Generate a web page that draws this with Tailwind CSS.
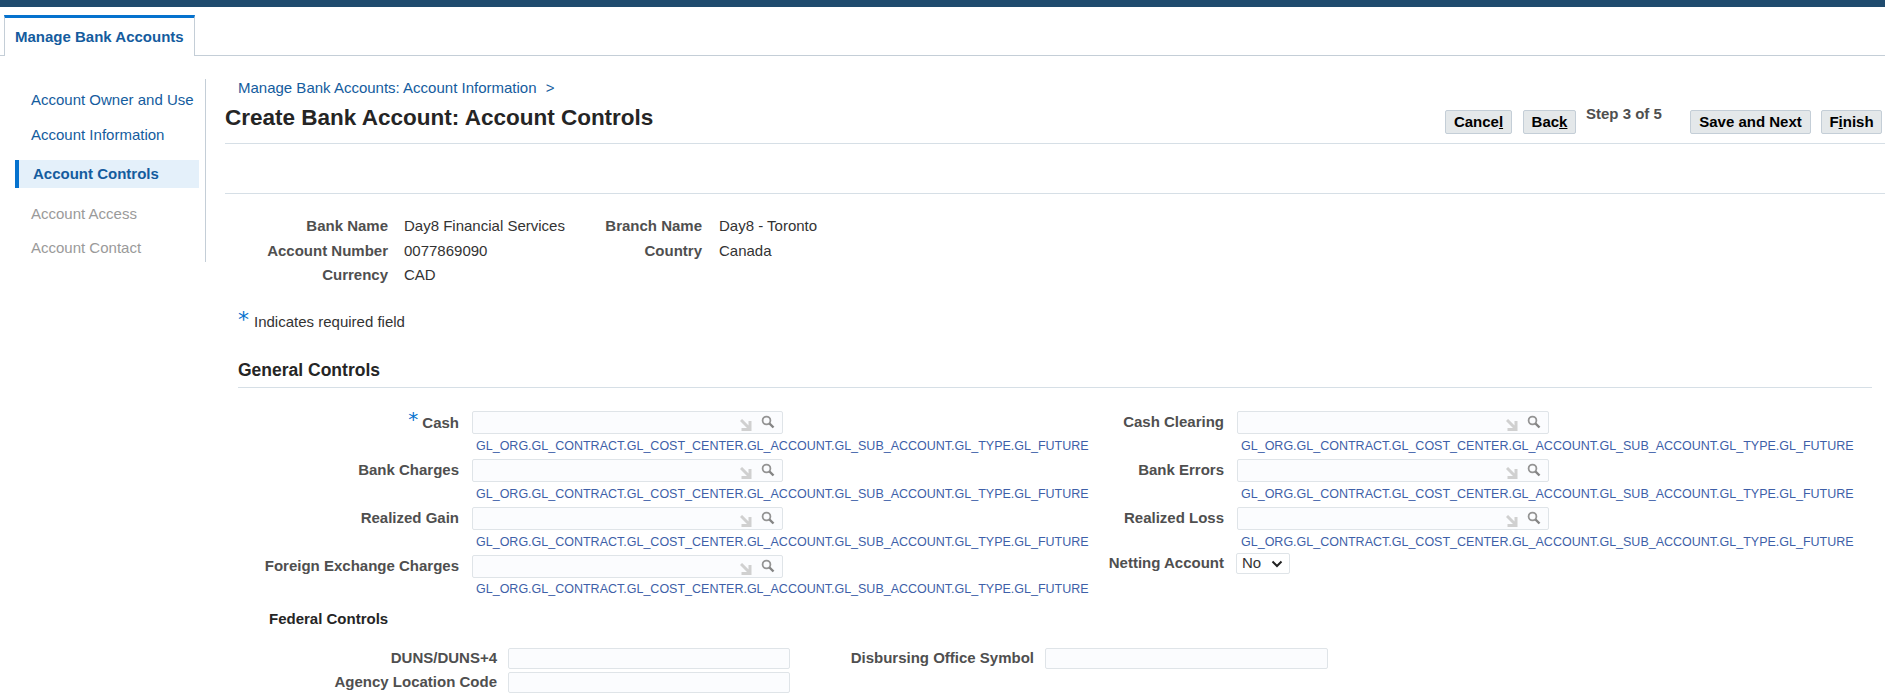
<!DOCTYPE html>
<html lang="en">

<head>
    <meta charset="UTF-8">
    <title>Create Bank Account: Account Controls</title>
    <script src="https://cdn.jsdelivr.net/npm/@tailwindcss/browser@4"></script>
</head>

<body class="bg-white font-['Liberation_Sans',Arial,sans-serif] h-[700px] overflow-hidden">

    <!-- Top bar -->
    <div class="h-[7px] bg-[#1f4b6e]"></div>

    <!-- Tab strip -->
    <div class="mt-[8px] h-[41px] border-b border-[#c4ced7] pl-[4px] flex">
        <div class="w-[191px] h-[41px] bg-white border-t-[3px] border-t-[#0572ce] border-x border-x-[#c4ced7] pl-[10px] flex items-center text-[15px] font-bold text-[#145c9e]">Manage Bank Accounts</div>
    </div>

    <div class="flex">
        <!-- Side navigation -->
        <div class="w-[206px] h-[183px] mt-[23px] border-r border-[#c4ced7] shrink-0 text-[15px]">
            <div class="h-[42px] pl-[31px] pt-[10px] text-[#145c9e] whitespace-nowrap">Account Owner and Use</div>
            <div class="h-[33px] pl-[31px] pt-[3px] text-[#145c9e]">Account Information</div>
            <div class="ml-[15px] mr-[6px] h-[28px] mt-[6px] pl-[14px] flex items-center border-l-[4px] border-[#0572ce] bg-[#e4f0fa] font-bold text-[#145c9e]">Account Controls</div>
            <div class="h-[17px] pl-[31px] pt-[17px] text-[#9a9a9a] leading-[17px] box-content">Account Access</div>
            <div class="pl-[31px] pt-[17px] text-[#9a9a9a] leading-[17px]">Account Contact</div>
        </div>

        <!-- Main content -->
        <div class="ml-[19px] w-[1660px] shrink-0">
            <div class="pl-[13px] pt-[24px] h-[41px] text-[15px] text-[#145c9e] leading-[16px]">Manage Bank Accounts: Account Information <span class="ml-[5px]">&gt;</span></div>

            <div class="flex h-[47px] border-b border-[#d6dfe6] relative">
                <h1 class="text-[22.500px] font-bold text-[#252525] leading-[24px] mt-[9px]">Create Bank Account: Account Controls</h1>
                <div class="ml-auto flex items-start mt-[13px] text-[15px] font-bold text-black">
                    <button class="w-[67px] h-[24px] bg-[#e4e8ea] border border-[#c4ced7] rounded-[2px]">Cance<u>l</u></button>
                    <button class="w-[53px] h-[24px] ml-[11px] bg-[#e4e8ea] border border-[#c4ced7] rounded-[2px]">Bac<u>k</u></button>
                    <div class="w-[114px] pl-[10px] text-[#4f4f4f] mt-[-7px]">Step 3 of 5</div>
                    <button class="w-[121px] h-[24px] bg-[#e4e8ea] border border-[#c4ced7] rounded-[2px]">Save and Next</button>
                    <button class="w-[61px] h-[24px] ml-[10px] mr-[3px] bg-[#e4e8ea] border border-[#c4ced7] rounded-[2px]">F<u>i</u>nish</button>
                </div>
            </div>
            <div class="h-[50px] border-b border-[#d6dfe6]"></div>

            <!-- Account summary -->
            <div class="mt-[20px] h-[74px] flex text-[15px] leading-[24.5px] text-[#333]">
                <div class="w-[163px] text-right font-bold text-[#4f4f4f]">
                    <div>Bank Name</div>
                    <div>Account Number</div>
                    <div>Currency</div>
                </div>
                <div class="ml-[16px] w-[298px]">
                    <div>Day8 Financial Services</div>
                    <div>0077869090</div>
                    <div>CAD</div>
                </div>
                <div class="w-[0px] flex justify-end whitespace-nowrap text-right font-bold text-[#4f4f4f]">
                    <div>
                        <div>Branch Name</div>
                        <div>Country</div>
                    </div>
                </div>
                <div class="ml-[17px]">
                    <div>Day8 - Toronto</div>
                    <div>Canada</div>
                </div>
            </div>

            <!-- Required note -->
            <div class="mt-[20px] ml-[13px] h-[24px] flex text-[15px] text-[#333]">
                <span class="text-[#0572ce] text-[22px] leading-[24px] w-[16px] font-['DejaVu_Sans']">*</span>
                <span class="mt-[6px] leading-[16px]">Indicates required field</span>
            </div>

            <!-- General Controls -->
            <div class="mt-[25px] ml-[13px] mr-[13px] h-[31px] border-b border-[#d6dfe6] text-[17.500px] font-bold text-[#252525] leading-[18px] pt-[4px]">General Controls</div>

            <div class="ml-[13px] mt-[23px] text-[15px]">
                <div class="flex h-[48px]">
                    <div class="w-[762px] shrink-0 flex">
                        <div class="w-[221px] shrink-0 h-[24px] flex items-center justify-end font-bold text-[#4f4f4f]"><span class="text-[#0572ce] text-[20px] font-normal mr-[4px] mt-[-8px] font-['DejaVu_Sans']">*</span>Cash</div>
                        <div class="ml-[13px]">
                            <div class="w-[311px] h-[23px] flex justify-end items-center bg-[#fbfcfe] border border-[#dfe4e8] rounded-[2px]">
                                <svg class="w-[12px] h-[12px] mt-[4px]" viewBox="0 0 12 12"><path d="M1 1l8 8M10 2v8.500H1.500" fill="none" stroke="#d0d0d0" stroke-width="3"/></svg>
                                <svg class="w-[14px] h-[14px] ml-[9px] mr-[7px] mt-[-2px]" viewBox="0 0 14 14"><circle cx="5.500" cy="5.500" r="3.900" fill="none" stroke="#949494" stroke-width="1.800"/><path d="M8.500 8.500l4 4" stroke="#848484" stroke-width="2.400"/></svg>
                            </div>
                            <div class="pl-[4px] mt-[4px] text-[12.500px] leading-[16px] text-[#3e5fa8] whitespace-nowrap">GL_ORG.GL_CONTRACT.GL_COST_CENTER.GL_ACCOUNT.GL_SUB_ACCOUNT.GL_TYPE.GL_FUTURE</div>
                        </div>
                    </div>
                    <div class="flex">
                        <div class="w-[224px] shrink-0 h-[23px] flex items-center justify-end font-bold text-[#4f4f4f]">Cash Clearing</div>
                        <div class="ml-[13px]">
                            <div class="w-[312px] h-[23px] flex justify-end items-center bg-[#fbfcfe] border border-[#dfe4e8] rounded-[2px]">
                                <svg class="w-[12px] h-[12px] mt-[4px]" viewBox="0 0 12 12"><path d="M1 1l8 8M10 2v8.500H1.500" fill="none" stroke="#d0d0d0" stroke-width="3"/></svg>
                                <svg class="w-[14px] h-[14px] ml-[9px] mr-[7px] mt-[-2px]" viewBox="0 0 14 14"><circle cx="5.500" cy="5.500" r="3.900" fill="none" stroke="#949494" stroke-width="1.800"/><path d="M8.500 8.500l4 4" stroke="#848484" stroke-width="2.400"/></svg>
                            </div>
                            <div class="pl-[4px] mt-[4px] text-[12.500px] leading-[16px] text-[#3e5fa8] whitespace-nowrap">GL_ORG.GL_CONTRACT.GL_COST_CENTER.GL_ACCOUNT.GL_SUB_ACCOUNT.GL_TYPE.GL_FUTURE</div>
                        </div>
                    </div>
                </div>

                <div class="flex h-[48px]">
                    <div class="w-[762px] shrink-0 flex">
                        <div class="w-[221px] shrink-0 h-[23px] flex items-center justify-end font-bold text-[#4f4f4f]">Bank Charges</div>
                        <div class="ml-[13px]">
                            <div class="w-[311px] h-[23px] flex justify-end items-center bg-[#fbfcfe] border border-[#dfe4e8] rounded-[2px]">
                                <svg class="w-[12px] h-[12px] mt-[4px]" viewBox="0 0 12 12"><path d="M1 1l8 8M10 2v8.500H1.500" fill="none" stroke="#d0d0d0" stroke-width="3"/></svg>
                                <svg class="w-[14px] h-[14px] ml-[9px] mr-[7px] mt-[-2px]" viewBox="0 0 14 14"><circle cx="5.500" cy="5.500" r="3.900" fill="none" stroke="#949494" stroke-width="1.800"/><path d="M8.500 8.500l4 4" stroke="#848484" stroke-width="2.400"/></svg>
                            </div>
                            <div class="pl-[4px] mt-[4px] text-[12.500px] leading-[16px] text-[#3e5fa8] whitespace-nowrap">GL_ORG.GL_CONTRACT.GL_COST_CENTER.GL_ACCOUNT.GL_SUB_ACCOUNT.GL_TYPE.GL_FUTURE</div>
                        </div>
                    </div>
                    <div class="flex">
                        <div class="w-[224px] shrink-0 h-[23px] flex items-center justify-end font-bold text-[#4f4f4f]">Bank Errors</div>
                        <div class="ml-[13px]">
                            <div class="w-[312px] h-[23px] flex justify-end items-center bg-[#fbfcfe] border border-[#dfe4e8] rounded-[2px]">
                                <svg class="w-[12px] h-[12px] mt-[4px]" viewBox="0 0 12 12"><path d="M1 1l8 8M10 2v8.500H1.500" fill="none" stroke="#d0d0d0" stroke-width="3"/></svg>
                                <svg class="w-[14px] h-[14px] ml-[9px] mr-[7px] mt-[-2px]" viewBox="0 0 14 14"><circle cx="5.500" cy="5.500" r="3.900" fill="none" stroke="#949494" stroke-width="1.800"/><path d="M8.500 8.500l4 4" stroke="#848484" stroke-width="2.400"/></svg>
                            </div>
                            <div class="pl-[4px] mt-[4px] text-[12.500px] leading-[16px] text-[#3e5fa8] whitespace-nowrap">GL_ORG.GL_CONTRACT.GL_COST_CENTER.GL_ACCOUNT.GL_SUB_ACCOUNT.GL_TYPE.GL_FUTURE</div>
                        </div>
                    </div>
                </div>

                <div class="flex h-[48px]">
                    <div class="w-[762px] shrink-0 flex">
                        <div class="w-[221px] shrink-0 h-[23px] flex items-center justify-end font-bold text-[#4f4f4f]">Realized Gain</div>
                        <div class="ml-[13px]">
                            <div class="w-[311px] h-[23px] flex justify-end items-center bg-[#fbfcfe] border border-[#dfe4e8] rounded-[2px]">
                                <svg class="w-[12px] h-[12px] mt-[4px]" viewBox="0 0 12 12"><path d="M1 1l8 8M10 2v8.500H1.500" fill="none" stroke="#d0d0d0" stroke-width="3"/></svg>
                                <svg class="w-[14px] h-[14px] ml-[9px] mr-[7px] mt-[-2px]" viewBox="0 0 14 14"><circle cx="5.500" cy="5.500" r="3.900" fill="none" stroke="#949494" stroke-width="1.800"/><path d="M8.500 8.500l4 4" stroke="#848484" stroke-width="2.400"/></svg>
                            </div>
                            <div class="pl-[4px] mt-[4px] text-[12.500px] leading-[16px] text-[#3e5fa8] whitespace-nowrap">GL_ORG.GL_CONTRACT.GL_COST_CENTER.GL_ACCOUNT.GL_SUB_ACCOUNT.GL_TYPE.GL_FUTURE</div>
                        </div>
                    </div>
                    <div class="flex">
                        <div class="w-[224px] shrink-0 h-[23px] flex items-center justify-end font-bold text-[#4f4f4f]">Realized Loss</div>
                        <div class="ml-[13px]">
                            <div class="w-[312px] h-[23px] flex justify-end items-center bg-[#fbfcfe] border border-[#dfe4e8] rounded-[2px]">
                                <svg class="w-[12px] h-[12px] mt-[4px]" viewBox="0 0 12 12"><path d="M1 1l8 8M10 2v8.500H1.500" fill="none" stroke="#d0d0d0" stroke-width="3"/></svg>
                                <svg class="w-[14px] h-[14px] ml-[9px] mr-[7px] mt-[-2px]" viewBox="0 0 14 14"><circle cx="5.500" cy="5.500" r="3.900" fill="none" stroke="#949494" stroke-width="1.800"/><path d="M8.500 8.500l4 4" stroke="#848484" stroke-width="2.400"/></svg>
                            </div>
                            <div class="pl-[4px] mt-[4px] text-[12.500px] leading-[16px] text-[#3e5fa8] whitespace-nowrap">GL_ORG.GL_CONTRACT.GL_COST_CENTER.GL_ACCOUNT.GL_SUB_ACCOUNT.GL_TYPE.GL_FUTURE</div>
                        </div>
                    </div>
                </div>

                <div class="flex h-[48px]">
                    <div class="w-[762px] shrink-0 flex">
                        <div class="w-[221px] shrink-0 h-[23px] flex items-center justify-end font-bold text-[#4f4f4f] whitespace-nowrap">Foreign Exchange Charges</div>
                        <div class="ml-[13px]">
                            <div class="w-[311px] h-[23px] flex justify-end items-center bg-[#fbfcfe] border border-[#dfe4e8] rounded-[2px]">
                                <svg class="w-[12px] h-[12px] mt-[4px]" viewBox="0 0 12 12"><path d="M1 1l8 8M10 2v8.500H1.500" fill="none" stroke="#d0d0d0" stroke-width="3"/></svg>
                                <svg class="w-[14px] h-[14px] ml-[9px] mr-[7px] mt-[-2px]" viewBox="0 0 14 14"><circle cx="5.500" cy="5.500" r="3.900" fill="none" stroke="#949494" stroke-width="1.800"/><path d="M8.500 8.500l4 4" stroke="#848484" stroke-width="2.400"/></svg>
                            </div>
                            <div class="pl-[4px] mt-[3px] text-[12.500px] leading-[16px] text-[#3e5fa8] whitespace-nowrap">GL_ORG.GL_CONTRACT.GL_COST_CENTER.GL_ACCOUNT.GL_SUB_ACCOUNT.GL_TYPE.GL_FUTURE</div>
                        </div>
                    </div>
                    <div class="flex mt-[-2px]">
                        <div class="w-[224px] shrink-0 h-[21px] flex items-center justify-end font-bold text-[#4f4f4f]">Netting Account</div>
                        <div class="ml-[12px] w-[54px] h-[21px] border border-[#dfe4e8] rounded-[2px] bg-white flex items-center pl-[5px] text-[#333]">
                            No
                            <svg class="w-[12px] h-[8px] ml-[10px]" viewBox="0 0 12 8"><path d="M1.500 1.500L6 6l4.500-4.500" fill="none" stroke="#222" stroke-width="2"/></svg>
                        </div>
                    </div>
                </div>
            </div>

            <!-- Federal Controls -->
            <div class="ml-[44px] mt-[1px] h-[34px] pt-[4px] text-[15px] font-bold text-[#252525]">Federal Controls</div>

            <div class="ml-[13px] text-[15px]">
                <div class="flex mt-[10px] h-[24px]">
                    <div class="w-[259px] h-[21px] flex items-center justify-end font-bold text-[#4f4f4f]">DUNS/DUNS+4</div>
                    <div class="ml-[11px] w-[282px] h-[21px] bg-[#fbfcfe] border border-[#dfe4e8] rounded-[2px]"></div>
                    <div class="w-[244px] h-[21px] flex items-center justify-end font-bold text-[#4f4f4f]">Disbursing Office Symbol</div>
                    <div class="ml-[11px] w-[283px] h-[21px] bg-[#fbfcfe] border border-[#dfe4e8] rounded-[2px]"></div>
                </div>
                <div class="flex h-[24px]">
                    <div class="w-[259px] h-[21px] flex items-center justify-end font-bold text-[#4f4f4f]">Agency Location Code</div>
                    <div class="ml-[11px] w-[282px] h-[21px] bg-[#fbfcfe] border border-[#dfe4e8] rounded-[2px]"></div>
                </div>
            </div>
        </div>
    </div>

</body>

</html>
